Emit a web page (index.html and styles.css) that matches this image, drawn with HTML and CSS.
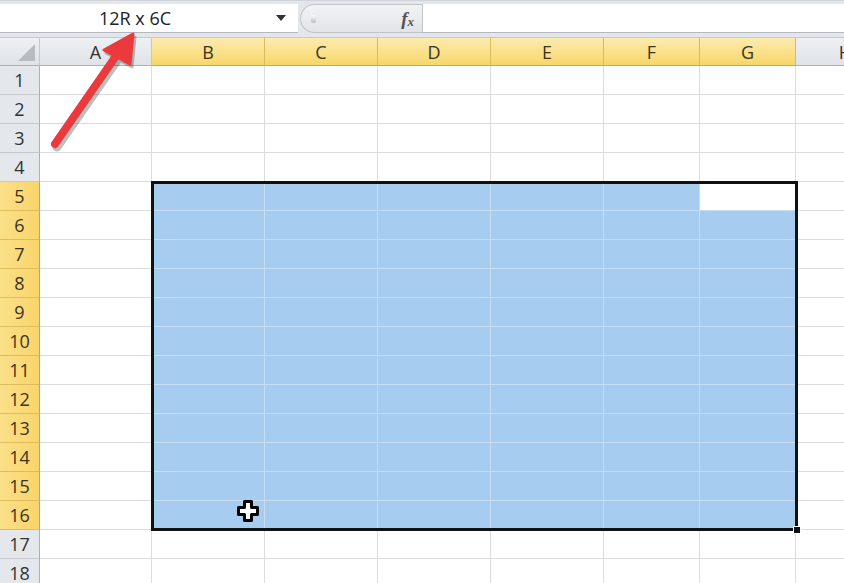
FILE: index.html
```html
<!DOCTYPE html>
<html lang="en">
<head>
    <meta charset="UTF-8">
    <meta name="viewport" content="width=device-width, initial-scale=1.0">
    <title>Selection size - Sheet1</title>
    <link rel="stylesheet" href="styles.css">
</head>
<body>
    <div class="app">
        <div class="formula-bar">
            <div class="name-box">
                <span class="name">12R x 6C</span>
                <span class="caret">
                    <svg width="10" height="6" viewBox="0 0 10 6"><path d="M0 0h10L5 6z" fill="#333"/></svg>
                </span>
            </div>
            <div class="fx-box">
                <span class="grip"></span>
                <span class="fx">f<sub>x</sub></span>
            </div>
            <div class="formula-input"></div>
        </div>

        <div class="sheet">
            <table class="grid">
                <colgroup>
                    <col class="c-row">
                    <col class="c-wide">
                    <col class="c-wide">
                    <col class="c-wide">
                    <col class="c-wide">
                    <col class="c-wide">
                    <col class="c-narrow">
                    <col class="c-narrow">
                    <col class="c-rest">
                </colgroup>
                <thead>
                    <tr>
                        <th class="corner"><span class="corner-tri"></span></th>
                        <th>A</th>
                        <th class="hl">B</th>
                        <th class="hl">C</th>
                        <th class="hl">D</th>
                        <th class="hl">E</th>
                        <th class="hl">F</th>
                        <th class="hl">G</th>
                        <th>H</th>
                    </tr>
                </thead>
                <tbody>
                    <tr><th>1</th><td></td><td></td><td></td><td></td><td></td><td></td><td></td><td></td></tr>
                    <tr><th>2</th><td></td><td></td><td></td><td></td><td></td><td></td><td></td><td></td></tr>
                    <tr><th>3</th><td></td><td></td><td></td><td></td><td></td><td></td><td></td><td></td></tr>
                    <tr><th>4</th><td></td><td></td><td></td><td></td><td></td><td></td><td></td><td></td></tr>
                    <tr class="picked"><th>5</th><td></td><td></td><td></td><td></td><td></td><td></td><td class="active"></td><td></td></tr>
                    <tr class="picked"><th>6</th><td></td><td></td><td></td><td></td><td></td><td></td><td></td><td></td></tr>
                    <tr class="picked"><th>7</th><td></td><td></td><td></td><td></td><td></td><td></td><td></td><td></td></tr>
                    <tr class="picked"><th>8</th><td></td><td></td><td></td><td></td><td></td><td></td><td></td><td></td></tr>
                    <tr class="picked"><th>9</th><td></td><td></td><td></td><td></td><td></td><td></td><td></td><td></td></tr>
                    <tr class="picked"><th>10</th><td></td><td></td><td></td><td></td><td></td><td></td><td></td><td></td></tr>
                    <tr class="picked"><th>11</th><td></td><td></td><td></td><td></td><td></td><td></td><td></td><td></td></tr>
                    <tr class="picked"><th>12</th><td></td><td></td><td></td><td></td><td></td><td></td><td></td><td></td></tr>
                    <tr class="picked"><th>13</th><td></td><td></td><td></td><td></td><td></td><td></td><td></td><td></td></tr>
                    <tr class="picked"><th>14</th><td></td><td></td><td></td><td></td><td></td><td></td><td></td><td></td></tr>
                    <tr class="picked"><th>15</th><td></td><td></td><td></td><td></td><td></td><td></td><td></td><td></td></tr>
                    <tr class="picked"><th>16</th><td></td><td></td><td></td><td></td><td></td><td></td><td></td><td></td></tr>
                    <tr><th>17</th><td></td><td></td><td></td><td></td><td></td><td></td><td></td><td></td></tr>
                    <tr><th>18</th><td></td><td></td><td></td><td></td><td></td><td></td><td></td><td></td></tr>
                </tbody>
            </table>

            <!-- selection outline B5:G16 -->
            <div class="selection"><span class="fill-handle"></span></div>

            <!-- mouse pointer -->
            <svg class="pointer" width="22" height="22" viewBox="0 0 22 22">
                <path d="M7.5 1.5h7v6h6v7h-6v6h-7v-6h-6v-7h6z" fill="#fff" stroke="#000" stroke-width="3" stroke-linejoin="round"/>
            </svg>
        </div>

        <!-- red callout arrow -->
        <svg class="callout" width="844" height="583" viewBox="0 0 844 583">
            <g opacity="0.25" transform="translate(2 3)">
                <line x1="55" y1="144" x2="116" y2="56" stroke="#000" stroke-width="9" stroke-linecap="round"/>
                <path d="M133 34L104 50L130 64z" fill="#000" stroke="#000" stroke-width="3" stroke-linejoin="round"/>
            </g>
            <line x1="55" y1="144" x2="116" y2="56" stroke="#ea3a3e" stroke-width="8" stroke-linecap="round"/>
            <path d="M133 34L104 50L130 64z" fill="#ea3a3e" stroke="#ea3a3e" stroke-width="3" stroke-linejoin="round"/>
        </svg>
    </div>
</body>
</html>
```

FILE: styles.css
```css
* {
    box-sizing: border-box;
}
body {
    margin: 0;
    font-family: "Open Sans", "Liberation Sans", sans-serif;
    background-color: #fff;
    color: #333;
    overflow: hidden;
}
.app {
    position: relative;
    width: 844px;
    height: 583px;
    overflow: hidden;
}

/* formula bar */
.formula-bar {
    display: flex;
    height: 37px;
    padding: 3px 0 4px;
    background-color: #e3e6ea;
    border-top: 1px solid #d0d4d9;
}
.name-box {
    width: 298px;
    display: flex;
    align-items: center;
    background-color: #fff;
    border-bottom: 1px solid #b4b9bf;
}
.name {
    flex: 1;
    text-align: center;
    font-size: 18px;
    color: #222;
}
.caret {
    width: 28px;
    display: flex;
    align-items: center;
    padding-left: 6px;
}
.fx-box {
    width: 122px;
    margin-left: 2px;
    display: flex;
    align-items: center;
    justify-content: space-between;
    padding: 0 8px 0 10px;
    background: linear-gradient(#f1f3f5, #e1e4e8);
    border: 1px solid #bfc4ca;
    border-right: none;
    border-radius: 16px 0 0 16px;
}
.grip {
    width: 5px;
    height: 8px;
    border-radius: 3px;
    background: linear-gradient(#fdfdfd, #b9bdc2);
}
.fx {
    font-family: "Liberation Serif", serif;
    font-style: italic;
    font-weight: bold;
    font-size: 19px;
    color: #555;
    line-height: 1;
}
.fx sub {
    font-size: 13px;
    vertical-align: -1px;
}
.formula-input {
    flex: 1;
    background-color: #fff;
    border-left: 1px solid #bfc4ca;
    border-bottom: 1px solid #b4b9bf;
}

/* sheet grid */
.sheet {
    position: relative;
}
.grid {
    table-layout: fixed;
    border-collapse: separate;
    border-spacing: 0;
    width: 896px;
}
.c-row { width: 40px; }
.c-wide { width: 113px; }
.c-narrow { width: 96px; }
.c-rest { width: 100px; }
.grid col.c-wide:nth-child(2) { width: 112px; }

.grid th {
    padding: 0;
    height: 29px;
    font-weight: normal;
    font-size: 18px;
    color: #333;
    background: linear-gradient(#eef0f3, #dfe3e8);
    border-right: 1px solid #c4c9cf;
    border-bottom: 1px solid #c4c9cf;
}
.grid thead th {
    border-top: 1px solid #c4c9cf;
    border-bottom-color: #a9b0b8;
}
.grid th.hl {
    background: linear-gradient(#fcebb0, #f8d768);
    border-right-color: #d9bb5c;
    border-bottom-color: #c9a642;
    color: #3a3420;
}
.grid tbody th {
    background: #e4e7eb;
    border-right-color: #a9b0b8;
}
.grid .picked th {
    background: linear-gradient(90deg, #fbe08a, #f9d46a);
    border-bottom-color: #dcbd5e;
    border-right-color: #c9a642;
    color: #3a3420;
}
.corner {
    position: relative;
}
.corner-tri {
    position: absolute;
    right: 4px;
    bottom: 4px;
    width: 0;
    height: 0;
    border-left: 17px solid transparent;
    border-bottom: 17px solid #b7bcc2;
}
.grid td {
    padding: 0;
    height: 29px;
    border-right: 1px solid #dadcde;
    border-bottom: 1px solid #dadcde;
}
.picked td:nth-child(n+3):nth-child(-n+8) {
    background-color: #a6cdf0;
    border-right-color: #c6ddf4;
    border-bottom-color: #c6ddf4;
}
.picked td.active:nth-child(n+3) {
    background-color: #fff;
}

/* overlays */
.selection {
    position: absolute;
    left: 151px;
    top: 144px;
    width: 647px;
    height: 350px;
    border: 3px solid #111;
    pointer-events: none;
}
.fill-handle {
    position: absolute;
    right: -6px;
    bottom: -6px;
    width: 8px;
    height: 8px;
    background-color: #111;
    border: 1px solid #fff;
}
.pointer {
    position: absolute;
    left: 237px;
    top: 463px;
}
.callout {
    position: absolute;
    left: 0;
    top: 0;
    pointer-events: none;
}
```
